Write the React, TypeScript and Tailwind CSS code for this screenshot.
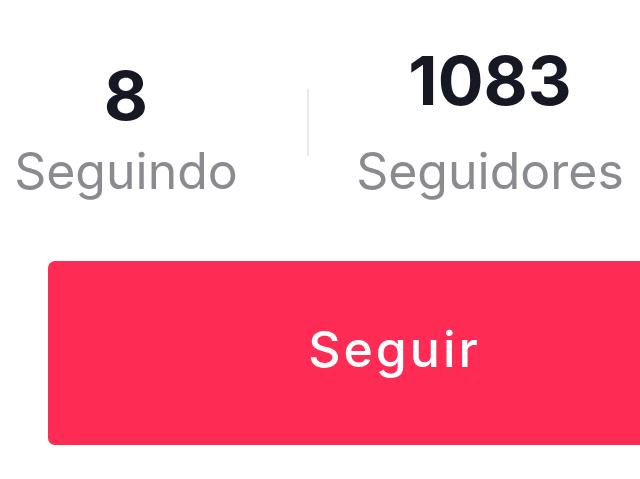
import React from "react";

export default function App() {
  return (
    <div
      className="w-[640px] h-[479px] overflow-hidden bg-white"
      style={{ fontFamily: "Inter, 'Noto Sans', sans-serif" }}
    >
      <div className="flex items-start h-[261px]">
        <div className="w-[252px] shrink-0 pt-[61px] flex flex-col items-center">
          <div className="text-[68px] leading-none font-bold text-[#161823]">8</div>
          <div className="mt-[17px] text-[50px] leading-none text-[#8a8b91]">Seguindo</div>
        </div>
        <div className="ml-[55px] mt-[89px] w-[2px] h-[67px] bg-[#e8e8e9] shrink-0" />
        <div className="w-[362px] shrink-0 pt-[46px] flex flex-col items-center">
          <div className="text-[68px] leading-none font-bold text-[#161823]">1083</div>
          <div className="mt-[32px] text-[50px] leading-none text-[#8a8b91]">Seguidores</div>
        </div>
      </div>
      <div className="pl-[48px]">
        <div className="w-[690px] h-[184px] rounded-[7px] bg-[#fe2c55] flex items-center justify-center pb-[8px]">
          <span className="pl-[3px] text-[50px] leading-none font-medium tracking-[3px] text-white">Seguir</span>
        </div>
      </div>
    </div>
  );
}
